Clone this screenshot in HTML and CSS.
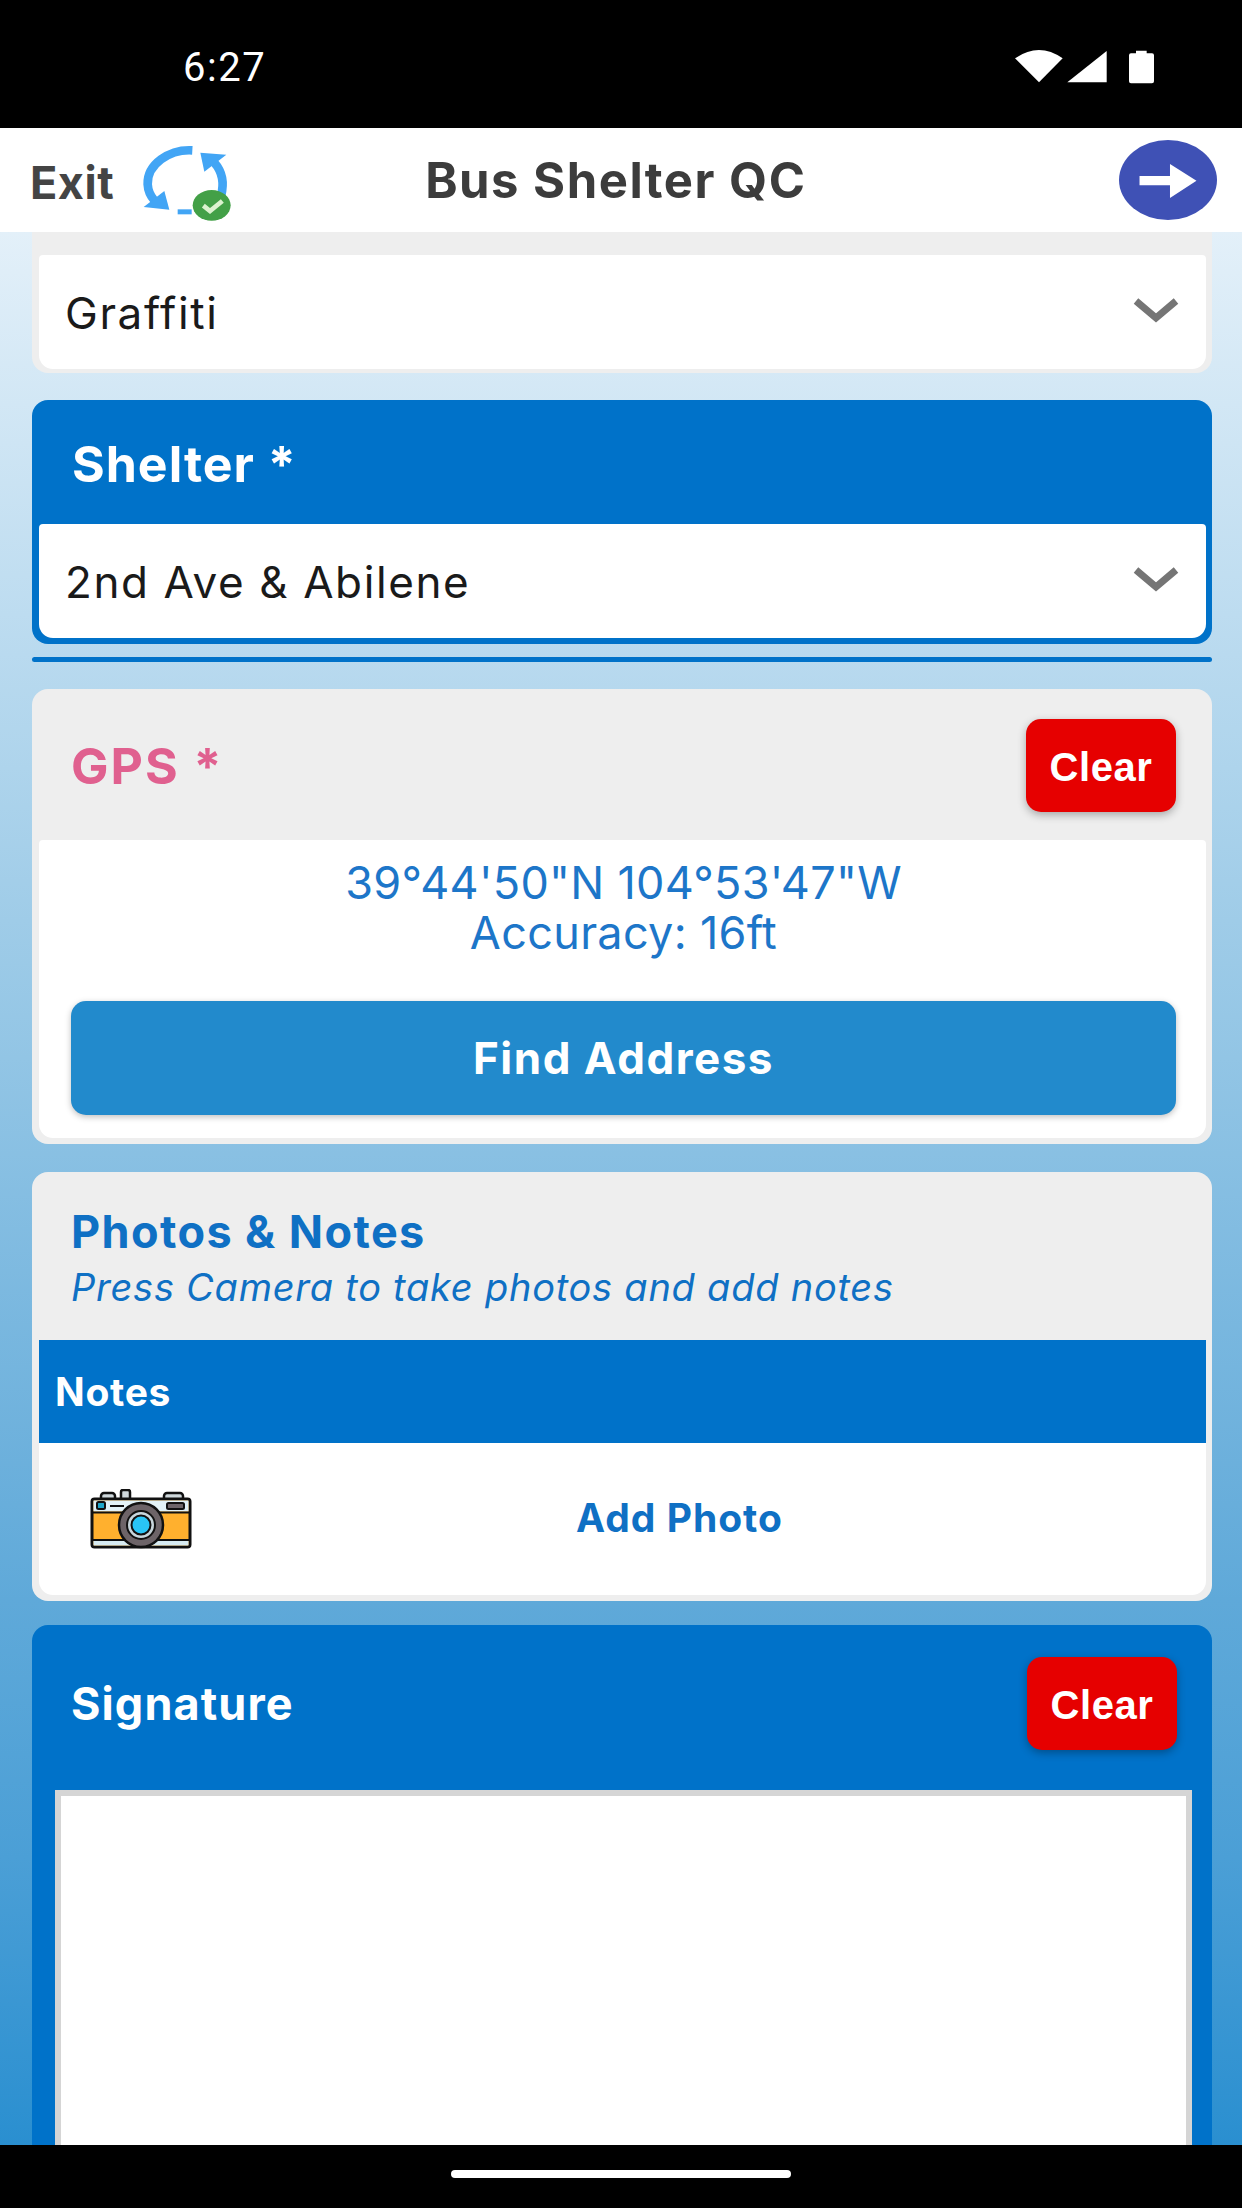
FILE: index.html
```html
<!DOCTYPE html>
<html lang="en">
<head>
<meta charset="utf-8">
<title>Bus Shelter QC</title>
<link rel="stylesheet" href="styles.css">
</head>
<body>
<div class="app">
  <div class="statusbar">
    <span class="time">6:27</span>
    <svg class="status-icons" width="180" height="40" viewBox="0 0 540 120">
      <path d="M105 25 Q177 -25 248 25 L177 97 Z" fill="#fff"/>
      <path d="M262 97 L380 3 V97 Z" fill="#fff"/>
      <path d="M447 16 Q447 10 453 10 H468 V2 H500 V10 H516 Q522 10 522 16 V94 Q522 100 516 100 H453 Q447 100 447 94 Z" fill="#fff"/>
    </svg>
  </div>
  <header class="topbar">
    <span class="exit">Exit</span>
    <svg class="sync" width="160" height="110" viewBox="0 0 480 330">
      <path d="M274 88 C205 84 138 130 140 190 C141 208 148 225 160 238" fill="none" stroke="#42a5f5" stroke-width="26"/>
      <path d="M128 258 L190 210 L205 266 Z" fill="#42a5f5"/>
      <path d="M340 125 C362 150 372 180 360 225" fill="none" stroke="#42a5f5" stroke-width="26"/>
      <path d="M298 95 L376 101 L310 152 Z" fill="#42a5f5"/>
      <rect x="230" y="265" width="42" height="15" fill="#42a5f5"/>
      <ellipse cx="332" cy="253" rx="57" ry="46" fill="#43a047"/>
      <path d="M307 254 L327 270 L364 240" fill="none" stroke="#dcf2cf" stroke-width="14"/>
    </svg>
    <h1 class="title">Bus Shelter QC</h1>
    <span class="next">
      <svg width="98" height="80" viewBox="0 0 296 240">
        <path d="M62 108 H154 V72 L234 122 L154 174 V136 H62 Z" fill="#fff"/>
      </svg>
    </span>
  </header>
  <main class="content">
    <section class="card card-first">
      <div class="select">
        <span>Graffiti</span>
        <svg class="chev" width="48" height="26" viewBox="0 0 48 26"><path d="M4 4 L24 21 L44 4" fill="none" stroke="#757575" stroke-width="7"/></svg>
      </div>
    </section>

    <section class="card card-blue card-shelter">
      <div class="head head-shelter"><h2 class="h-white">Shelter *</h2></div>
      <div class="select">
        <span>2nd Ave &amp; Abilene</span>
        <svg class="chev" width="48" height="26" viewBox="0 0 48 26"><path d="M4 4 L24 21 L44 4" fill="none" stroke="#757575" stroke-width="7"/></svg>
      </div>
    </section>
    <div class="rule"></div>

    <section class="card card-gps">
      <div class="head head-gps">
        <h2 class="h-pink">GPS *</h2>
        <button class="clear">Clear</button>
      </div>
      <div class="gps-body">
        <p class="coords">39°44'50"N 104°53'47"W<br>Accuracy: 16ft</p>
        <button class="find">Find Address</button>
      </div>
    </section>

    <section class="card card-photos">
      <div class="head-photos">
        <h2 class="h-blue">Photos &amp; Notes</h2>
        <p class="hint">Press Camera to take photos and add notes</p>
      </div>
      <div class="notes-bar">Notes</div>
      <div class="photo-row">
        <svg class="camera" width="102" height="60" viewBox="0 0 102 60">
          <rect x="11" y="4" width="14" height="10" rx="3" fill="#cfd8dc" stroke="#111" stroke-width="2.5"/>
          <rect x="31" y="1" width="9" height="13" rx="2" fill="#cfd8dc" stroke="#111" stroke-width="2.5"/>
          <rect x="74" y="4" width="19" height="10" rx="3" fill="#cfd8dc" stroke="#111" stroke-width="2.5"/>
          <rect x="2" y="10" width="98" height="48" rx="2.5" fill="#ffb02e" stroke="#111" stroke-width="3"/>
          <rect x="3.5" y="11.5" width="95" height="11" fill="#e3f2f7"/>
          <rect x="3.5" y="52" width="95" height="4.5" fill="#d8ecf2"/>
          <path d="M2 23.5 H100" stroke="#111" stroke-width="2"/>
          <path d="M2 51 H100" stroke="#111" stroke-width="2"/>
          <rect x="7" y="13" width="8" height="7" rx="1.5" fill="#1fa6c9" stroke="#111" stroke-width="2"/>
          <path d="M20 17 H34" stroke="#111" stroke-width="2"/>
          <rect x="77" y="14" width="17" height="6" rx="1.5" fill="#6d6468" stroke="#111" stroke-width="2"/>
          <circle cx="51" cy="36" r="22" fill="#6d6468" stroke="#111" stroke-width="2.5"/>
          <circle cx="51" cy="36" r="14" fill="#c8d6dc" stroke="#111" stroke-width="2"/>
          <circle cx="51" cy="36" r="9.5" fill="#29c5f6" stroke="#111" stroke-width="2"/>
        </svg>
        <span class="add-photo">Add Photo</span>
      </div>
    </section>

    <section class="card card-blue card-sign">
      <div class="head head-sign">
        <h2 class="h-white h-sign">Signature</h2>
        <button class="clear">Clear</button>
      </div>
      <div class="canvas"></div>
    </section>
  </main>
  <footer class="navbar"><span class="pill"></span></footer>
</div>
</body>
</html>
```
FILE: styles.css
```css
* { box-sizing: border-box; }
html, body { margin: 0; padding: 0; }
body { width: 1242px; height: 2208px; overflow: hidden; font-family: Inter, "Liberation Sans", sans-serif; background: #000; }
h1, h2, p { margin: 0; }
.app { width: 1242px; height: 2208px; display: flex; flex-direction: column; }

.statusbar { height: 128px; flex: none; background: #000; display: flex; align-items: flex-start; justify-content: space-between; }
.time { color: #fff; font-family: Roboto, sans-serif; font-size: 40px; line-height: 44px; margin: 46px 0 0 183px; letter-spacing: 1.5px; }
.status-icons { margin: 50px 82px 0 0; }

.topbar { height: 104px; flex: none; background: #fff; display: flex; align-items: center; position: relative; z-index: 2; }
.exit { font-family: Inter, sans-serif; font-weight: 700; font-size: 45px; letter-spacing: .5px; color: #444; margin-left: 30px; margin-top: 4px; }
.sync { margin-left: -13px; flex: none; margin-top: -8px; }
.title { font-family: Inter, sans-serif; font-weight: 700; font-size: 49px; letter-spacing: 1.5px; color: #3c3c3c; margin-left: 164px; white-space: nowrap; }
.next { margin-left: auto; margin-right: 25px; width: 98px; height: 80px; border-radius: 50%; background: #3f51b5; display: flex; }

.content { flex: 1; min-height: 0; overflow: hidden; padding: 0 30px 0 32px; display: flex; flex-direction: column;
  background: linear-gradient(180deg, #e3f0f9 0%, #bddcf0 20%, #9fcce8 36%, #5fa9d9 71.5%, #4b9fd6 85%, #2a8fd0 100%); }
.card { flex: none; background: #eeeeee; border-radius: 16px; }
.card-first { height: 141px; padding: 23px 6px 4px 7px; border-radius: 0 0 16px 16px; }
.select { height: 114px; background: #fff; border-radius: 4px 4px 14px 14px; display: flex; align-items: center; justify-content: space-between; padding: 2px 26px 0 26px;
  font-family: Inter, sans-serif; font-size: 44px; color: #1a1a1a; letter-spacing: 1.6px; }
.chev { margin-top: -6px; }

.card-blue { background: #0072c9; }
.card-shelter { margin-top: 27px; height: 244px; padding: 0 6px 5px 7px; }
.head { display: flex; align-items: center; justify-content: space-between; }
.head-shelter { height: 124px; padding: 4px 0 0 33px; }
.h-white { color: #fff; font-family: Inter, sans-serif; font-weight: 700; font-size: 50px; letter-spacing: 1px; }
.rule { flex: none; height: 5px; margin-top: 13px; background: #0072c9; border-radius: 3px; }

.card-gps { margin-top: 27px; height: 455px; padding: 0 6px 6px 7px; overflow: hidden; }
.head-gps { height: 151px; padding: 2px 30px 0 32px; }
.h-pink { color: #e0608f; font-family: Inter, sans-serif; font-weight: 700; font-size: 50px; letter-spacing: 2px; }
.clear { width: 150px; height: 93px; border: 0; border-radius: 15px; background: #e60000; color: #fff; font-family: "Liberation Sans", sans-serif; font-weight: 700; font-size: 40px; letter-spacing: .6px; box-shadow: 0 3px 8px rgba(0,0,0,.3); padding: 3px 0 0; }
.gps-body { background: #fff; height: 298px; border-radius: 4px 4px 14px 14px; padding: 18px 30px 0 32px; }
.coords { font-family: Inter, sans-serif; font-size: 45px; line-height: 50px; color: #1d76c9; text-align: center; letter-spacing: .3px; }
.find { display: block; width: 100%; height: 114px; margin-top: 43px; border: 0; border-radius: 15px; background: #228acc; color: #fff; font-family: Inter, sans-serif; font-weight: 700; font-size: 44px; letter-spacing: 1.5px; box-shadow: 0 2px 6px rgba(0,0,0,.25); }

.card-photos { margin-top: 28px; height: 429px; padding: 0 6px 5px 7px; overflow: hidden; }
.head-photos { height: 168px; padding: 36px 32px 0; }
.h-blue { color: #0f70c4; font-family: Inter, sans-serif; font-weight: 700; font-size: 45px; letter-spacing: 1.4px; line-height: 48px; }
.hint { color: #0f70c4; font-family: Inter, sans-serif; font-style: italic; font-size: 38px; letter-spacing: .75px; line-height: 48px; margin-top: 7px; }
.notes-bar { height: 103px; background: #0072c9; color: #fff; font-family: Inter, sans-serif; font-weight: 700; font-size: 39px; letter-spacing: .7px; display: flex; align-items: center; padding-left: 16px; }
.photo-row { height: 152px; background: #fff; border-radius: 0 0 14px 14px; display: flex; align-items: center; padding-left: 51px; }
.add-photo { color: #0f70c4; font-family: Inter, sans-serif; font-weight: 700; font-size: 39px; letter-spacing: 1px; margin-left: 384px; margin-top: -3px; }

.card-sign { margin-top: 24px; height: 600px; padding: 0 20px 0 23px; }
.head-sign { height: 165px; padding: 0 15px 8px 16px; }
.h-sign { font-size: 45px; letter-spacing: 1.1px; }
.canvas { height: 400px; background: #fff; border: 6px solid #d5d5d5; }

.navbar { height: 63px; flex: none; background: #000; display: flex; justify-content: center; padding-top: 25px; position: relative; z-index: 2; }
.pill { width: 340px; height: 8px; border-radius: 4px; background: #fff; }
```
